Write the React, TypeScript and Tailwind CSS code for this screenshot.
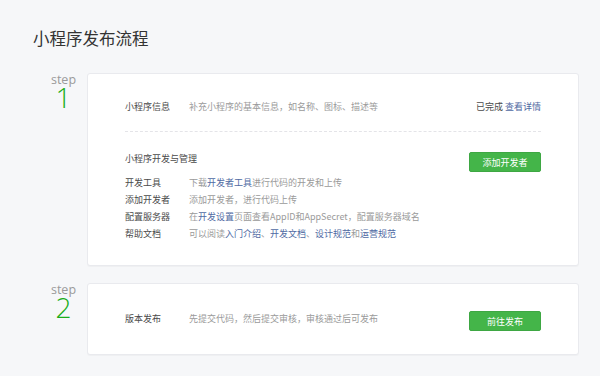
const font = { fontFamily: '"Noto Sans CJK SC", "Noto Sans", sans-serif' };

function StepLabel({ n }: { n: number }) {
  return (
    <div className="w-[54px] shrink-0 pl-[7px] text-center" style={{ fontFamily: '"Open Sans", sans-serif' }}>
      <div className="text-[12.5px] leading-[13px] text-[#9a9a9a]">step</div>
      <div className="text-[28px] leading-[22px] font-light text-[#1aad19]">{n}</div>
    </div>
  );
}

function Btn({ children }: { children: React.ReactNode }) {
  return (
    <button className="w-[72px] h-[20px] rounded-[2px] bg-[#44b549] border border-[#3ea743] text-white text-[9px] leading-none">
      {children}
    </button>
  );
}

const Link = ({ children }: { children: React.ReactNode }) => (
  <span className="text-[#4f6aa3]">{children}</span>
);

const rows: [string, React.ReactNode][] = [
  ["开发工具", <>下载<Link>开发者工具</Link>进行代码的开发和上传</>],
  ["添加开发者", "添加开发者，进行代码上传"],
  ["配置服务器", <>在<Link>开发设置</Link>页面查看AppID和AppSecret，配置服务器域名</>],
  ["帮助文档", <>可以阅读<Link>入门介绍</Link>、<Link>开发文档</Link>、<Link>设计规范</Link>和<Link>运营规范</Link></>],
];

export default function App() {
  return (
    <div className="w-[600px] h-[376px] bg-[#f6f7f9] px-[33px] pt-[26px] overflow-hidden" style={font}>
      <h1 className="text-[16.5px] leading-[24px] text-[#333]">小程序发布流程</h1>

      <div className="flex mt-[23px] mr-[-12px]">
        <StepLabel n={1} />
        <div className="flex-1 bg-white rounded-[3px] border border-[#e9eaee] shadow-[0_1px_1px_rgba(0,0,0,0.03)] px-[37px] pt-[25px] pb-[23px] text-[9px]">
          <div className="flex items-center h-[16px]">
            <span className="w-[64px] text-[#4a4a4a]">小程序信息</span>
            <span className="flex-1 text-[#9a9a9a]">补充小程序的基本信息，如名称、图标、描述等</span>
            <span className="text-[#4a4a4a]">已完成 <Link>查看详情</Link></span>
          </div>
          <div className="mt-[16px] border-t border-dashed border-[#e4e4e8]" />
          <div className="mt-[20px] flex justify-between items-start h-[20px]">
            <span className="leading-[14px] text-[#4a4a4a]">小程序开发与管理</span>
            <Btn>添加开发者</Btn>
          </div>
          <div className="mt-[2px]">
            {rows.map(([label, desc]) => (
              <div key={label} className="flex leading-[17px]">
                <span className="w-[64px] text-[#4a4a4a]">{label}</span>
                <span className="text-[#9a9a9a]">{desc}</span>
              </div>
            ))}
          </div>
        </div>
      </div>

      <div className="flex mt-[17px] mr-[-12px]">
        <StepLabel n={2} />
        <div className="flex-1 h-[72px] bg-white rounded-[3px] border border-[#e9eaee] shadow-[0_1px_1px_rgba(0,0,0,0.03)] px-[37px] flex items-center text-[9px]">
          <span className="w-[64px] text-[#4a4a4a]">版本发布</span>
          <span className="flex-1 text-[#9a9a9a]">先提交代码，然后提交审核，审核通过后可发布</span>
          <div className="pt-[4px]">
            <Btn>前往发布</Btn>
          </div>
        </div>
      </div>
    </div>
  );
}
